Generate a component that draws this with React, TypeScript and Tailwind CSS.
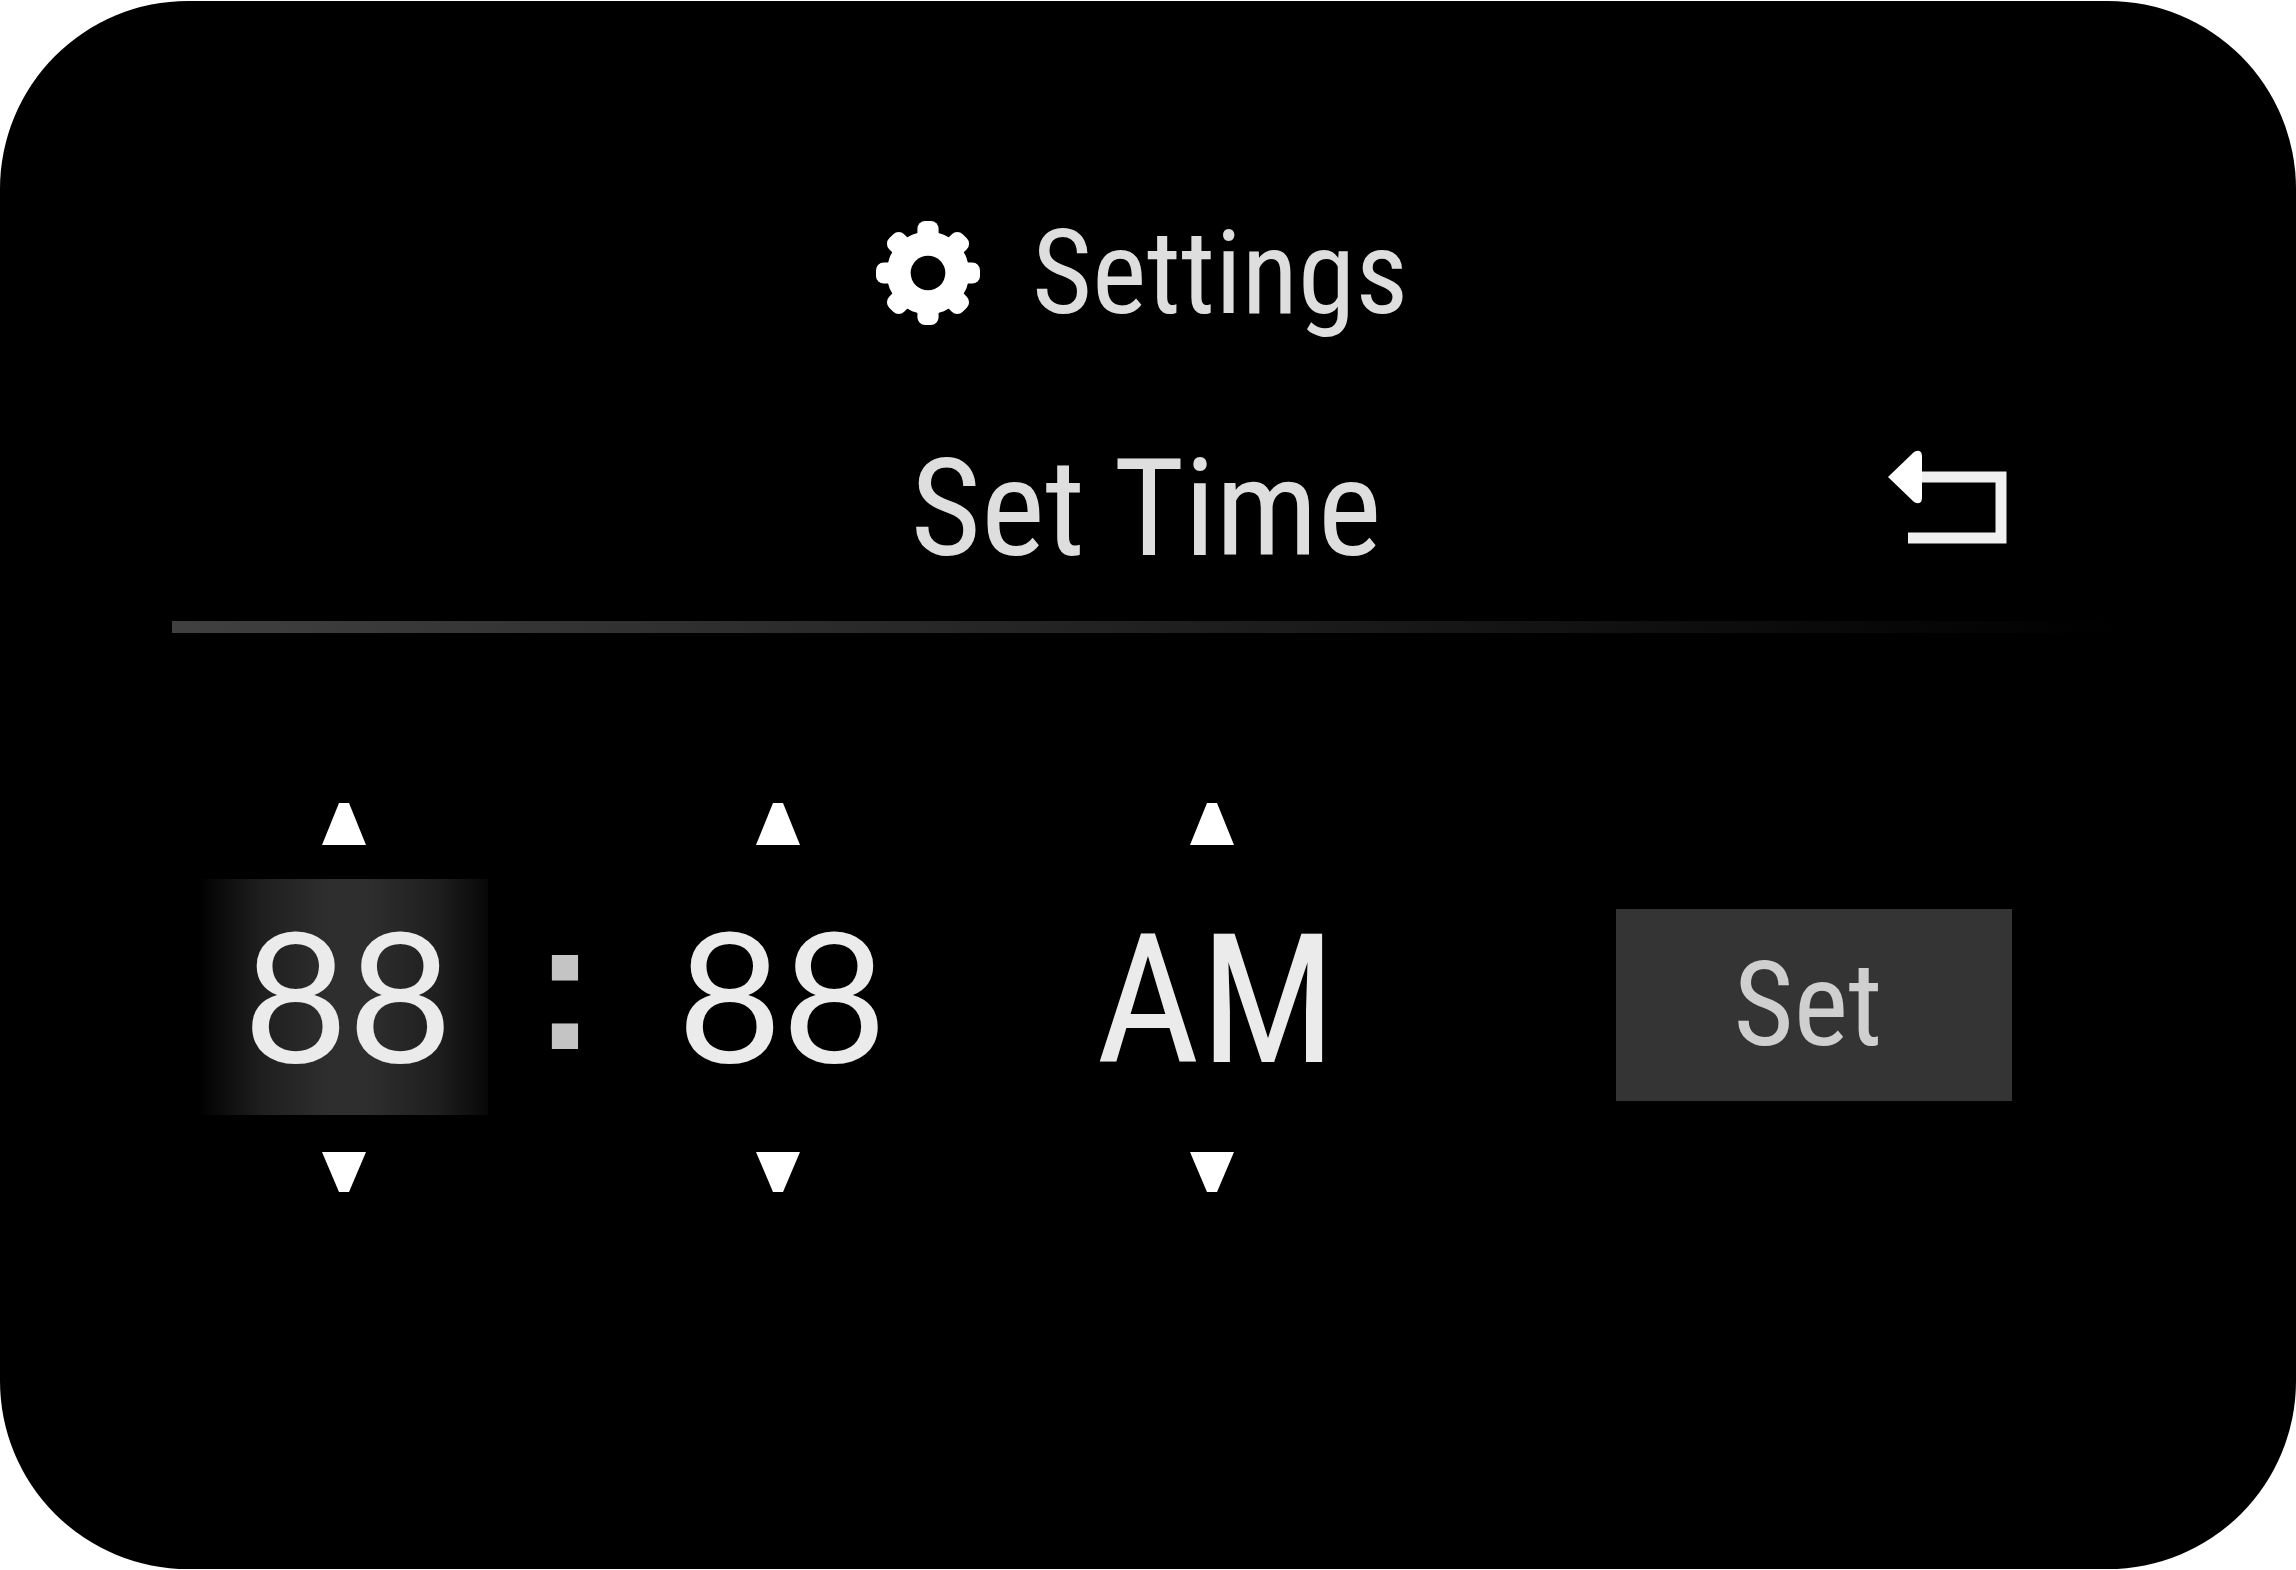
import { useState } from 'react';

const fields = [
  { id: 'hour', label: 'Hour', value: '88', style: 'pb-2 font-[Lato,sans-serif] text-[180px]' },
  { id: 'minute', label: 'Minute', value: '88', style: 'pb-2 font-[Lato,sans-serif] text-[180px]' },
  { id: 'period', label: 'AM or PM', value: 'AM', style: "pt-2 font-['Roboto_Condensed',sans-serif] text-[180px]" },
];

const teeth = [0, 45, 90, 135];

function GearIcon() {
  return (
    <svg viewBox="0 0 108 108" className="size-26 shrink-0" aria-hidden="true">
      {teeth.map((a) => (
        <rect key={a} x="43" y="0" width="22" height="108" rx="8" fill="#fff" transform={`rotate(${a} 54 54)`} />
      ))}
      <circle cx="54" cy="54" r="43" fill="#fff" />
      <circle cx="54" cy="54" r="18" fill="#000" />
    </svg>
  );
}

function BackIcon() {
  return (
    <svg viewBox="0 0 120 96" className="h-24 w-30" aria-hidden="true">
      <path d="M30 28 H113 V89 H20" fill="none" stroke="#f0f0f0" strokeWidth="11" />
      <path d="M0 28 L26 3 Q34 -1 34 8 V48 Q34 57 26 53 Z" fill="#fff" />
    </svg>
  );
}

function Arrow({ down = false }: { down?: boolean }) {
  return (
    <svg viewBox="0 0 48 46" className="h-[46px] w-12" aria-hidden="true">
      <path fill="#fff" d={down ? 'M2 5 H46 L29 45 H19 Z' : 'M2 44 H46 L29 2 H19 Z'} />
    </svg>
  );
}

export default function App() {
  const [active, setActive] = useState('hour');

  return (
    <div className="min-h-screen bg-white py-px">
      <main className="min-h-[calc(100vh-2px)] rounded-[188px] bg-black pt-54 pr-44 pb-20 pl-43 font-['Roboto_Condensed',sans-serif] text-[#dedede]">
        <header className="flex h-28 items-center justify-center gap-13 pr-2">
          <GearIcon />
          <span className="text-[116px] leading-none">Settings</span>
        </header>

        <div className="mt-25 grid h-40 grid-cols-[1fr_auto_1fr] items-center pr-28">
          <h1 className="col-start-2 ml-28 text-[136px] leading-none">Set Time</h1>
          <button aria-label="Back" className="justify-self-end pb-6">
            <BackIcon />
          </button>
        </div>

        <div className="mt-8 h-3 bg-linear-to-r/srgb from-[#404040] to-black" />

        <div className="mt-41 flex items-center justify-between pr-27 pl-7">
          <div className="flex items-center">
            {fields.map((f) => (
              <div key={f.id} className="flex items-center">
                {f.id !== 'hour' && (
                  <span className="w-[146px] pb-5 pl-2 text-center font-['Liberation_Sans',sans-serif] text-[186px] leading-none font-bold text-[#c4c4c4]">
                    {f.id === 'minute' ? ':' : ''}
                  </span>
                )}
                <div className="flex w-72 flex-col items-center gap-8" role="group" aria-label={f.label}>
                  <button aria-label={`${f.label} up`} onClick={() => setActive(f.id)} className="px-10 pt-1">
                    <Arrow />
                  </button>
                  <output
                    className={`flex h-59 w-full items-center justify-center pl-2 leading-none text-[#ebebeb] ${f.style} ${
                      active === f.id
                        ? 'bg-[linear-gradient(90deg,#000,#060606_3%,#1f1f1f_22%,#2e2e2e_45%,#2e2e2e_58%,#1f1f1f_82%,#080808)]'
                        : ''
                    }`}
                  >
                    {f.value}
                  </output>
                  <button aria-label={`${f.label} down`} onClick={() => setActive(f.id)} className="px-10">
                    <Arrow down />
                  </button>
                </div>
              </div>
            ))}
          </div>
          <button className="mt-5 h-48 w-99 bg-[#343434] pr-3 text-[116px] leading-none text-[#cfcfcf]">Set</button>
        </div>
      </main>
    </div>
  );
}
